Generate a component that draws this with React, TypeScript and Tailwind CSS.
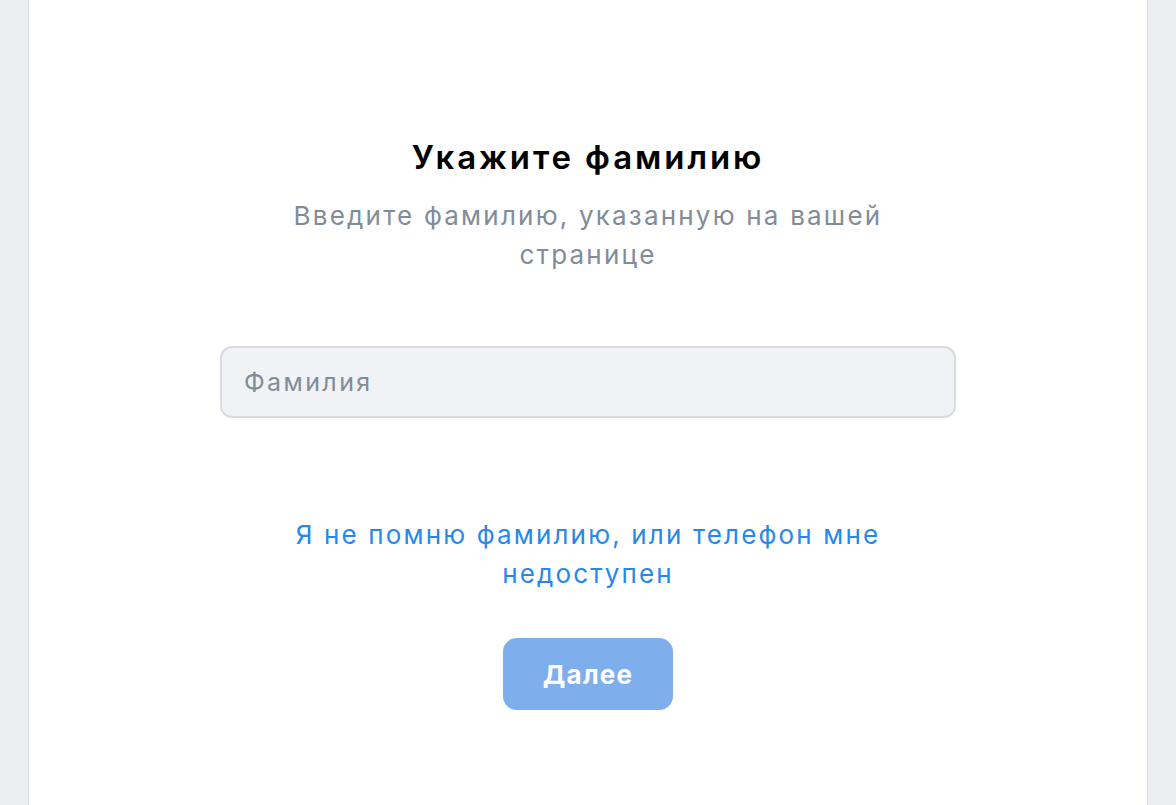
import { useState } from "react";

const App = () => {
  const [lastName, setLastName] = useState("");

  return (
    <div className="min-h-[805px] w-full bg-[#ebedf0] flex justify-center font-['Inter',sans-serif]">
      <div className="w-[1120px] min-h-[805px] bg-white border-x border-[#dfe1e5] flex flex-col items-center pt-[133px]">
        <h1 className="text-[33px] leading-[48px] font-semibold text-black tracking-[2.9px]">
          Укажите фамилию
        </h1>
        <p className="mt-[15px] w-[640px] text-center text-[26px] leading-[39px] text-[#818c99] tracking-[2.2px]">
          Введите фамилию, указанную на вашей странице
        </p>
        <input
          value={lastName}
          onChange={(e) => setLastName(e.target.value)}
          placeholder="Фамилия"
          className="mt-[72px] w-[736px] h-[72px] rounded-[12px] bg-[#f0f2f5] border-2 border-[#d8dbdf] px-[22px] text-[25px] tracking-[2.4px] text-black placeholder:text-[#818c99] outline-none"
        />
        <a
          href="#"
          className="mt-[97px] w-[640px] text-center text-[26px] leading-[39px] text-[#2688eb] tracking-[2.15px]"
        >
          Я не помню фамилию, или телефон мне недоступен
        </a>
        <button
          disabled
          className="mt-[45px] w-[170px] h-[72px] rounded-[14px] bg-[#7eaeeb] text-white text-[26px] font-bold tracking-[1.2px]"
        >
          Далее
        </button>
      </div>
    </div>
  );
};

export default App;
